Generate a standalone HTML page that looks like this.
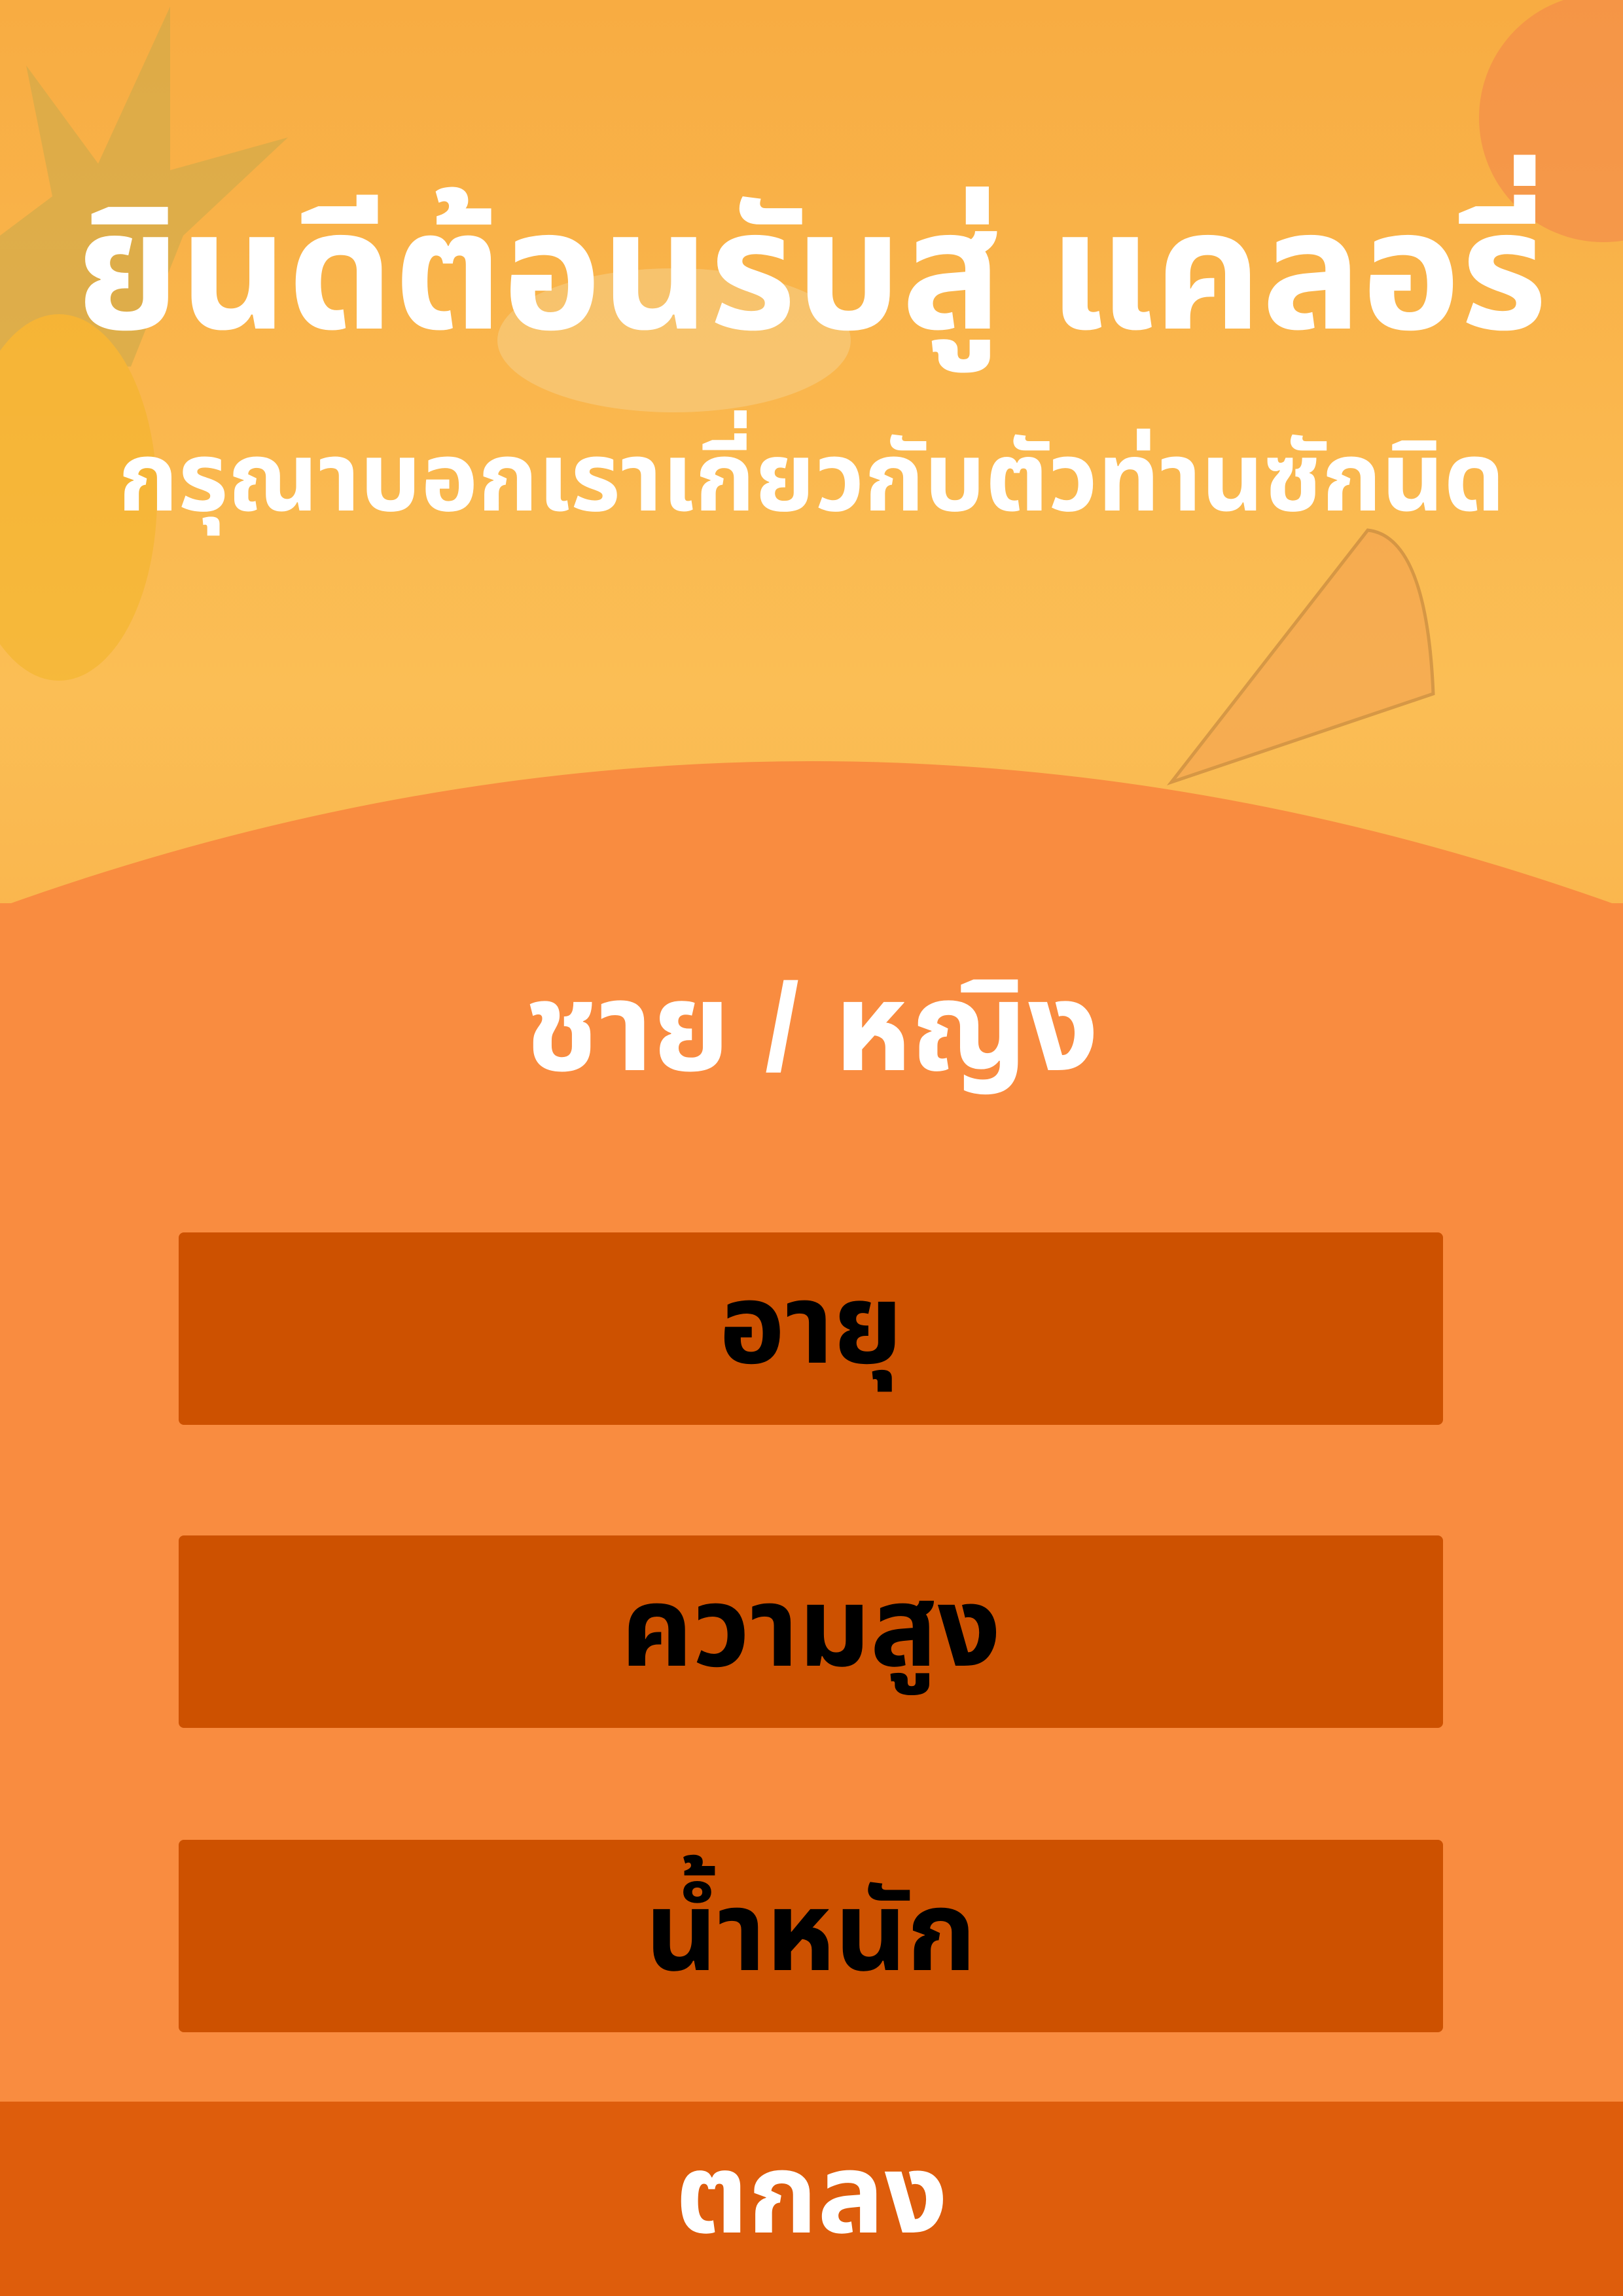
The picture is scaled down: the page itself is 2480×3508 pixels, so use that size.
<!DOCTYPE html>
<html><head><meta charset="utf-8"><style>
html,body{margin:0;padding:0;}
body{width:2480px;height:3508px;position:relative;overflow:hidden;background:linear-gradient(180deg,#F8AC42 0%,#FBBE55 30%,#F9B24A 45%);font-family:"Liberation Sans","Noto Sans Thai","Loma","Garuda",sans-serif;font-weight:bold;}
.t{position:absolute;left:0;width:2480px;text-align:center;color:#fff;}
.btn{position:absolute;left:273px;width:1932px;height:294px;background:#CD5100;border-radius:8px;color:#000;font-size:170px;display:flex;align-items:center;justify-content:center;}
</style></head><body>
<svg style="position:absolute;left:0;top:0" width="2480" height="1400">
 <g opacity="0.55">
  <path d="M0 360 L80 300 L40 100 L150 250 L260 10 L260 260 L440 210 L280 360 L200 560 L0 560Z" fill="#C8A94A"/>
  <ellipse cx="90" cy="760" rx="150" ry="280" fill="#F3B526"/>
  <circle cx="2450" cy="180" r="190" fill="#F2834A"/>
  <path d="M1790 1195 L2090 810 Q2180 820 2190 1060 Z" fill="#F3A050" stroke="#B87A3A" stroke-width="5"/>
  <ellipse cx="1030" cy="520" rx="270" ry="110" fill="#F6D08A"/>
 </g>
 <path d="M0 1386 Q1240 940 2480 1386 L2480 1400 L0 1400Z" fill="#F98C40"/>
</svg>
<div style="position:absolute;left:0;top:1380px;width:2480px;height:1840px;background:#F98C40"></div>
<div class="t" style="top:265px;font-size:255px;line-height:300px;">ยินดีต้อนรับสู่ แคลอรี่</div>
<div class="t" style="top:645px;font-size:147px;line-height:170px;">กรุณาบอกเราเกี่ยวกับตัวท่านซักนิด</div>
<div class="t" style="top:1460px;font-size:190px;line-height:220px;">ชาย / หญิง</div>
<div class="btn" style="top:1883px">อายุ</div>
<div class="btn" style="top:2346px">ความสูง</div>
<div class="btn" style="top:2811px">น้ำหนัก</div>
<div style="position:absolute;left:0;top:3211px;width:2480px;height:297px;background:#DE5D0C;color:#fff;font-size:170px;display:flex;align-items:center;justify-content:center;">ตกลง</div>
</body></html>
